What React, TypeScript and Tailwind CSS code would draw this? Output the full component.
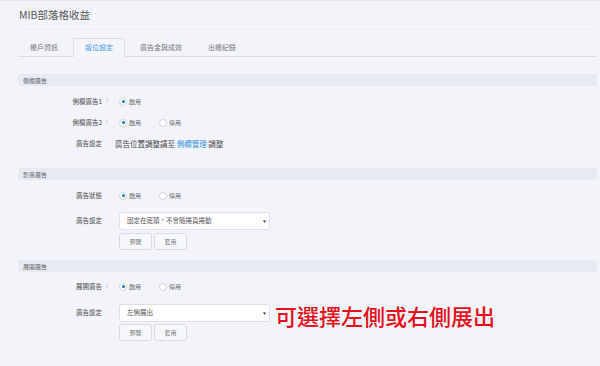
import React from 'react'

const tabs = ['帳戶資訊', '版位設定', '廣告金與成效', '出帳紀錄']

function Radio({ checked, label }: { checked?: boolean; label: string }) {
  return (
    <div className="flex items-center">
      <span className="w-[8px] h-[8px] rounded-full border border-[#d3d6dd] bg-white flex items-center justify-center">
        {checked && <span className="w-[3px] h-[3px] rounded-full bg-[#1976d2]" />}
      </span>
      <span className="ml-[2px] text-[6px] text-[#666]">{label}</span>
    </div>
  )
}

function InfoMark() {
  return <span className="font-['DejaVu_Serif',serif] italic text-[7px] text-[#c4c7ce] leading-none">i</span>
}

function Row({
  label,
  info,
  className = 'h-[21px]',
  children,
}: {
  label: string
  info?: boolean
  className?: string
  children: React.ReactNode
}) {
  return (
    <div className={`flex items-center ${className}`}>
      <div className="w-[84px] text-right text-[6.5px] text-[#4a4a4a]">{label}</div>
      <div className="w-[17px] pl-[4px] flex items-center">{info && <InfoMark />}</div>
      <div className="flex items-center">{children}</div>
    </div>
  )
}

function SectionHeader({ title }: { title: string }) {
  return (
    <div className="h-[12px] bg-[#e6eaf3] rounded-[2px] flex items-center pl-[5px] text-[6px] text-[#666]">
      {title}
    </div>
  )
}

function SelectBox({ value }: { value: string }) {
  return (
    <div className="w-[151px] h-[18px] bg-white border border-[#dde0e7] rounded-[3px] flex items-center justify-between pl-[7px] pr-[3px]">
      <span className="text-[6.5px] text-[#555]">{value}</span>
      <svg width="3" height="3" viewBox="0 0 4 4">
        <path d="M0 0.5 L4 0.5 L2 3.5 Z" fill="#222" />
      </svg>
    </div>
  )
}

function Buttons() {
  return (
    <div className="flex gap-[2px] ml-[101px]">
      {['預覽', '套用'].map((b) => (
        <div
          key={b}
          className="w-[33px] h-[17px] border border-[#d8dbe2] bg-[#f6f7fa] rounded-[3px] flex items-center justify-center text-[6px] text-[#777]"
        >
          {b}
        </div>
      ))}
    </div>
  )
}

export default function App() {
  return (
    <div className="w-[600px] h-[366px] bg-[#f3f4f9] border-t border-[#e6e8ef] font-['Noto_Sans_CJK_TC','Noto_Sans',sans-serif] overflow-hidden">
      <div className="pl-[18px] pr-[3px]">
        {/* Title */}
        <div className="h-[29px] flex items-center pl-[1px] border-b border-[#eceef3] text-[10.5px] text-[#555]">
          MIB部落格收益
        </div>

        {/* Tabs */}
        <div className="mt-[9px] h-[18px] flex items-end gap-[4px] pl-[1px] border-b border-[#d9dce4]">
          {tabs.map((t, i) =>
            i === 1 ? (
              <div
                key={t}
                className="h-[19px] -mb-px px-[11px] flex items-center border border-[#dcdfe6] border-b-[#f5f6fa] rounded-t-[3px] bg-[#f5f6fa] text-[7px] text-[#3d97d8]"
              >
                {t}
              </div>
            ) : (
              <div key={t} className="h-[18px] px-[11px] flex items-center text-[7px] text-[#777]">
                {t}
              </div>
            ),
          )}
        </div>

        {/* 側欄廣告 */}
        <div className="mt-[17px]">
          <SectionHeader title="側欄廣告" />
          <div className="pt-[5px]">
            <Row label="側欄廣告1" info>
              <Radio checked label="啟用" />
            </Row>
            <Row label="側欄廣告2" info>
              <div className="flex items-center gap-[18px]">
                <Radio checked label="啟用" />
                <Radio label="停用" />
              </div>
            </Row>
            <Row label="廣告設定">
              <span className="-ml-[4px] text-[7.5px] text-[#444]">
                廣告位置調整請至 <span className="text-[#2b8fd6]">側欄管理</span> 調整
              </span>
            </Row>
          </div>
        </div>

        {/* 影音廣告 */}
        <div className="mt-[14px]">
          <SectionHeader title="影音廣告" />
          <div className="pt-[5px]">
            <Row label="廣告狀態">
              <div className="flex items-center gap-[18px]">
                <Radio checked label="啟用" />
                <Radio label="停用" />
              </div>
            </Row>
            <Row label="廣告設定" className="h-[18px] mt-[6px]">
              <SelectBox value="固定在底頭，不會隨捲頁捲動" />
            </Row>
            <div className="mt-[3px]">
              <Buttons />
            </div>
          </div>
        </div>

        {/* 展開廣告 */}
        <div className="mt-[10px]">
          <SectionHeader title="展開廣告" />
          <div className="pt-[4px]">
            <Row label="展開廣告" info>
              <div className="flex items-center gap-[18px]">
                <Radio checked label="啟用" />
                <Radio label="停用" />
              </div>
            </Row>
            <Row label="廣告設定" className="h-[18px] mt-[7px]">
              <SelectBox value="左側展出" />
              <span className="ml-[5px] mt-[3px] text-[22px] leading-none font-medium text-[#e5101c] whitespace-nowrap">
                可選擇左側或右側展出
              </span>
            </Row>
            <div className="mt-[2px]">
              <Buttons />
            </div>
          </div>
        </div>
      </div>
    </div>
  )
}
